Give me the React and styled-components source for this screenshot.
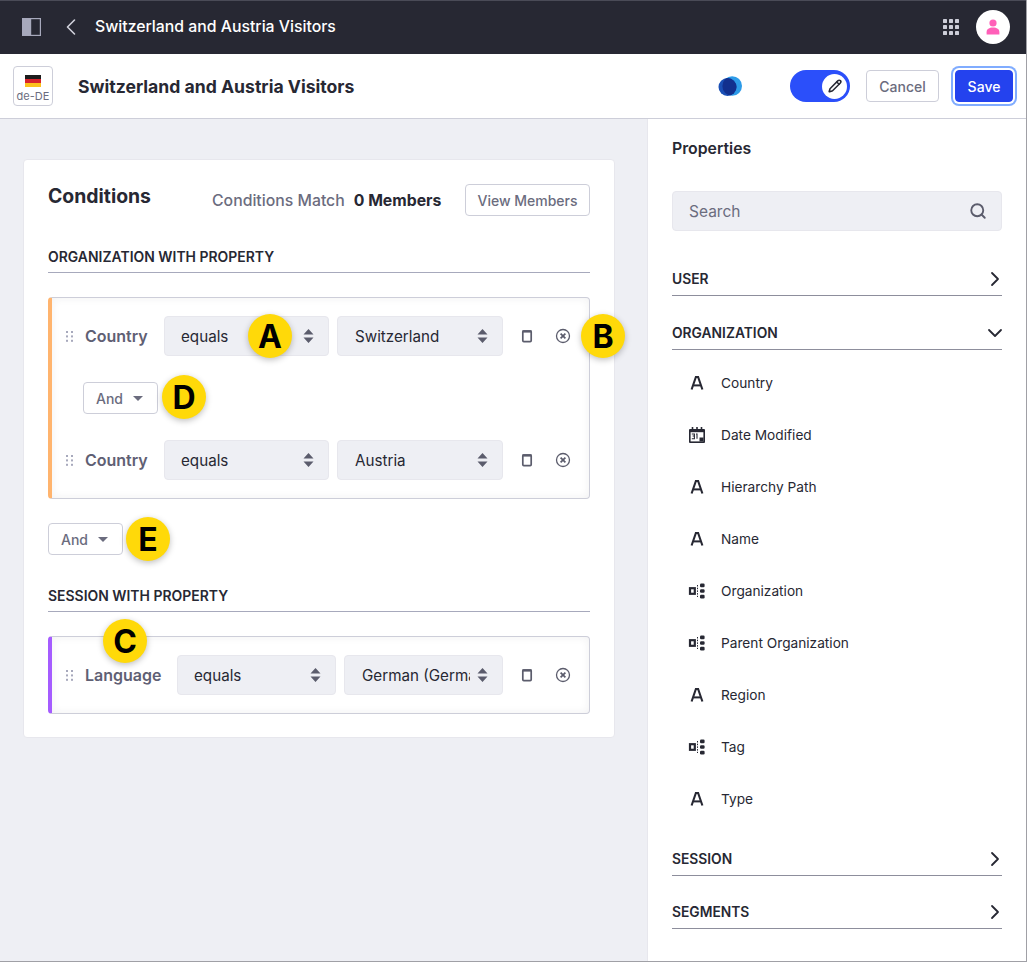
import styled, { createGlobalStyle } from "styled-components";
import { LuChevronLeft, LuChevronRight, LuChevronDown, LuSearch, LuPencil } from "react-icons/lu";

const GlobalStyle = createGlobalStyle`
  html, body {
    margin: 0;
    padding: 0;
    background: #eeeff4;
    font-family: Inter, "Liberation Sans", sans-serif;
  }
  * {
    box-sizing: border-box;
  }
`;

const Page = styled.div`
  width: 1027px;
  height: 962px;
  display: flex;
  flex-direction: column;
  overflow: hidden;
  border-right: 1px solid #a0a0a6;
  border-bottom: 1px solid #a0a0a6;
`;

const TopBar = styled.header`
  height: 54px;
  flex: none;
  background: #272833;
  border-top: 1px solid #4a4b57;
  display: flex;
  align-items: center;
  padding: 0 16px 2px 22px;
  color: #fff;
`;

const PanelIcon = styled.svg`
  width: 19px;
  height: 18px;
`;

const BackIcon = styled(LuChevronLeft)`
  width: 28px;
  height: 28px;
  color: #cfd0da;
  margin: 0 10px 0 16px;
  stroke-width: 1.4;
`;

const TopTitle = styled.span`
  font-size: 15.8px;
  font-weight: 500;
  flex: 1;
`;

const AppsIcon = styled.svg`
  width: 16px;
  height: 16px;
  margin-right: 17px;
`;

const Avatar = styled.div`
  width: 34px;
  height: 34px;
  border-radius: 50%;
  background: #fff;
  display: flex;
  align-items: center;
  justify-content: center;
`;

const SubBar = styled.div`
  height: 65px;
  flex: none;
  background: #fff;
  border-bottom: 1px solid #cdced9;
  display: flex;
  align-items: center;
  padding: 0 13px;
`;

const LocaleBox = styled.div`
  width: 40px;
  height: 40px;
  border: 1px solid #cdced9;
  border-radius: 4px;
  display: flex;
  flex-direction: column;
  align-items: center;
  padding-top: 8px;
  font-size: 11px;
  color: #6b6c7e;
  margin-right: 25px;
  line-height: 14px;
`;

const Flag = styled.div`
  width: 16px;
  height: 12px;
  margin-bottom: 2px;
  background: linear-gradient(#1c1c1c 0 33%, #d8232a 33% 66%, #fcc21b 66% 100%);
`;

const SubTitle = styled.h1`
  margin: 0;
  flex: 1;
  font-size: 17.6px;
  font-weight: 700;
  color: #272833;
`;

const LogoIcon = styled.svg`
  width: 24px;
  height: 20px;
  margin-right: 48px;
`;

const Toggle = styled.div`
  width: 60px;
  height: 32px;
  border-radius: 16px;
  background: #2b4ffa;
  display: flex;
  align-items: center;
  justify-content: flex-end;
  padding-right: 3px;
  margin-right: 16px;
`;

const ToggleKnob = styled.div`
  width: 25px;
  height: 25px;
  border-radius: 50%;
  background: #fff;
  display: flex;
  align-items: center;
  justify-content: center;
  color: #272833;

  svg {
    stroke-width: 2.6;
  }
`;

const Button = styled.button`
  height: 32px;
  width: ${(p) => p.$width || 73}px;
  padding: 0;
  justify-content: center;
  background: #fff;
  border: 1px solid #cdced9;
  border-radius: 4px;
  color: #6b6c7e;
  font-family: inherit;
  font-size: 14px;
  font-weight: 500;
  display: flex;
  align-items: center;
`;

const SaveButton = styled(Button)`
  margin-left: 16px;
  background: #2442ee;
  border-color: #2442ee;
  color: #fff;
  box-shadow: 0 0 0 2px #fff, 0 0 0 4px #80acff;
`;

const Body = styled.div`
  flex: 1;
  display: flex;
  min-height: 0;
`;

const Main = styled.main`
  width: 647px;
  flex: none;
  padding: 40px 32px 0 23px;
`;

const Card = styled.section`
  height: 579px;
  background: #fff;
  border: 1px solid #e7e7ed;
  border-radius: 4px;
  padding: 24px 24px 0;
`;

const CardHead = styled.div`
  display: flex;
  align-items: flex-start;
  height: 32px;
`;

const CardTitle = styled.h2`
  margin: 0;
  width: 164px;
  font-size: 19.4px;
  line-height: 24px;
  font-weight: 700;
  color: #272833;
`;

const MatchText = styled.div`
  flex: 1;
  font-size: 15.8px;
  line-height: 34px;
  font-weight: 500;
  color: #6b6c7e;

  strong {
    margin-left: 9px;
    font-weight: 700;
    color: #272833;
  }
`;

const SectionTitle = styled.div`
  margin-top: 32px;
  height: 25px;
  border-bottom: 1px solid #a7a9bc;
  font-size: 13.95px;
  line-height: 18px;
  font-weight: 600;
  color: #272833;
`;

const Group = styled.div`
  margin-top: 24px;
  padding: 18px 0 18px;
  border: 1px solid #cdced9;
  border-left: 4px solid ${(p) => p.$accent};
  border-radius: 4px;
  box-shadow: inset 0 0 8px rgba(39, 40, 51, 0.07);
  display: flex;
  flex-direction: column;
`;

const Row = styled.div`
  display: flex;
  align-items: center;
  height: 40px;
  padding-left: 14px;
`;

const Grip = styled.svg`
  width: 7px;
  height: 11px;
  margin-right: 12px;
  flex: none;
`;

const FieldLabel = styled.span`
  width: ${(p) => p.$width}px;
  flex: none;
  font-size: 16px;
  font-weight: 600;
  color: #5f6074;
`;

const Select = styled.div`
  width: ${(p) => p.$width}px;
  height: 40px;
  flex: none;
  margin-right: 8px;
  padding: 0 14px 0 ${(p) => p.$inset}px;
  background: #eeeff4;
  border: 1px solid #e7e7ed;
  border-radius: 4px;
  display: flex;
  align-items: center;
  justify-content: space-between;
  font-size: 15.2px;
  color: #272833;

  span {
    overflow: hidden;
    white-space: nowrap;
    flex: 1;
    min-width: 0;
  }
`;

const Sort = styled.svg`
  width: 11px;
  height: 14px;
  flex: none;
  margin-left: 7px;
`;

const ActionIcon = styled.svg`
  width: 16px;
  height: 16px;
  flex: none;
  margin-left: ${(p) => p.$left}px;
`;

const AndButton = styled(Button)`
  width: 75px;
  padding: 0 12px;
  justify-content: space-between;
  margin: ${(p) => p.$margin};

  &::after {
    content: "";
    border-left: 5px solid transparent;
    border-right: 5px solid transparent;
    border-top: 5px solid #6b6c7e;
    margin-right: 2px;
  }
`;

const Badge = styled.div`
  position: absolute;
  left: ${(p) => p.$x}px;
  top: ${(p) => p.$y}px;
  width: 44px;
  height: 44px;
  border-radius: 50%;
  background: #ffd909;
  box-shadow: 0 2px 6px rgba(0, 0, 0, 0.25);
  color: #000;
  font-size: 32px;
  font-weight: 700;
  display: flex;
  align-items: center;
  justify-content: center;
  z-index: 2;
`;

const Side = styled.aside`
  flex: 1;
  background: #fff;
  border-left: 1px solid #e7e7ed;
  padding: 20px 24px 0 24px;
`;

const SideTitle = styled.h3`
  margin: 0;
  font-size: 15.8px;
  line-height: 19px;
  font-weight: 600;
  color: #272833;
`;

const SearchBox = styled.div`
  margin-top: 33px;
  height: 40px;
  background: #eeeff4;
  border: 1px solid #e7e7ed;
  border-radius: 4px;
  display: flex;
  align-items: center;
  justify-content: space-between;
  padding: 0 14px 0 16px;
  font-size: 15.5px;
  color: #6b6c7e;

  svg {
    stroke-width: 2.5;
  }
`;

const SectionHead = styled.div`
  margin-top: ${(p) => p.$top}px;
  height: 34px;
  border-bottom: 1px solid #8d8e9c;
  display: flex;
  align-items: center;
  justify-content: space-between;
  font-size: 13.8px;
  font-weight: 600;
  color: #272833;

  svg {
    width: 24px;
    height: 24px;
    margin-right: -5px;
    stroke-width: 1.8;
  }
`;

const PropertyList = styled.ul`
  list-style: none;
  margin: 7px 0 0;
  padding: 0;
`;

const PropertyItem = styled.li`
  height: 52px;
  display: flex;
  align-items: center;
  padding-left: 16px;
  font-size: 13.7px;
  color: #272833;
`;

const PropertyIcon = styled.div`
  width: 33px;
  flex: none;
  display: flex;
`;

const TextGlyph = () => (
  <svg width="18" height="18" viewBox="0 0 18 18">
    <path d="M3.6 15.5 7.9 3h2.2l4.3 12.5" fill="none" stroke="#272833" strokeWidth="2.1" />
    <path d="M5.4 11.4h7.2" stroke="#272833" strokeWidth="2" />
  </svg>
);

const DateGlyph = () => (
  <svg width="18" height="18" viewBox="0 0 18 18">
    <path d="M2 3h14a1 1 0 0 1 1 1v12a1 1 0 0 1-1 1H2a1 1 0 0 1-1-1V4a1 1 0 0 1 1-1z" fill="#272833" />
    <path d="M4.5 1v3M9 1v3M13.5 1v3" stroke="#272833" strokeWidth="1.6" />
    <rect x="2.6" y="6.2" width="12.8" height="9.2" fill="#fff" />
    <path d="M3.8 8h2.6v2H4.6h1.8v2.8H3.8M8 8h1v4.8" fill="none" stroke="#272833" strokeWidth="1.1" />
    <path d="M11.5 11.5h4v4h-4z" fill="#272833" />
  </svg>
);

const OrgGlyph = () => (
  <svg width="18" height="18" viewBox="0 0 18 18">
    <rect x="2" y="6.2" width="4.8" height="5.6" fill="none" stroke="#272833" strokeWidth="2.2" />
    <path d="M9.5 3v12" stroke="#272833" strokeWidth="1" strokeDasharray="1.5 1.2" />
    <rect x="12" y="1.6" width="4.6" height="3.6" rx="1.2" fill="#272833" />
    <rect x="12" y="7.2" width="4.6" height="3.6" rx="1.2" fill="#272833" />
    <rect x="12" y="12.8" width="4.6" height="3.6" rx="1.2" fill="#272833" />
  </svg>
);

const SortIcon = () => (
  <Sort viewBox="0 0 11 14">
    <path d="M5.5 0 10.5 5.5H.5zM5.5 14 .5 8.5h10z" fill="#5b5c6c" />
  </Sort>
);

const GripIcon = () => (
  <Grip viewBox="0 0 7 11">
    {[0, 4.4, 8.8].map((y) => (
      <g key={y} fill="#a7a9bc">
        <rect x="0" y={y} width="2" height="2" />
        <rect x="5" y={y} width="2" height="2" />
      </g>
    ))}
  </Grip>
);

const Actions = () => (
  <>
    <ActionIcon $left={8} viewBox="0 0 16 16">
      <rect x="3.8" y="3" width="8.4" height="10.6" rx="1" fill="none" stroke="#5b5c6c" strokeWidth="1.7" />
      <path d="M3.4 3.4h9.2" stroke="#5b5c6c" strokeWidth="2.4" />
    </ActionIcon>
    <ActionIcon $left={20} viewBox="0 0 16 16">
      <circle cx="8" cy="8" r="6.5" fill="none" stroke="#5b5c6c" strokeWidth="1.3" />
      <path d="M5.6 5.6l4.8 4.8M10.4 5.6l-4.8 4.8" stroke="#5b5c6c" strokeWidth="1.7" />
    </ActionIcon>
  </>
);

function CriteriaRow({ label, labelWidth, first, second, firstWidth, secondWidth }) {
  return (
    <Row>
      <GripIcon />
      <FieldLabel $width={labelWidth}>{label}</FieldLabel>
      <Select $width={firstWidth} $inset={16}>
        <span>{first}</span>
        <SortIcon />
      </Select>
      <Select $width={secondWidth} $inset={17}>
        <span>{second}</span>
        <SortIcon />
      </Select>
      <Actions />
    </Row>
  );
}

const properties = [
  ["Country", TextGlyph],
  ["Date Modified", DateGlyph],
  ["Hierarchy Path", TextGlyph],
  ["Name", TextGlyph],
  ["Organization", OrgGlyph],
  ["Parent Organization", OrgGlyph],
  ["Region", TextGlyph],
  ["Tag", OrgGlyph],
  ["Type", TextGlyph],
];

const badges = [
  ["A", 248, 314],
  ["B", 581, 314],
  ["C", 103, 619],
  ["D", 162, 375],
  ["E", 126, 517],
];

export default function App() {
  return (
    <Page>
      <GlobalStyle />
      <TopBar>
        <PanelIcon viewBox="0 0 19 18">
          <rect x="0.6" y="0.6" width="17.8" height="16.8" fill="none" stroke="#a7a9bc" strokeWidth="1.2" />
          <rect x="0.6" y="0.6" width="8.6" height="16.8" fill="#a7a9bc" />
        </PanelIcon>
        <BackIcon />
        <TopTitle>Switzerland and Austria Visitors</TopTitle>
        <AppsIcon viewBox="0 0 16 16">
          {[0, 6, 12].map((y) =>
            [0, 6, 12].map((x) => (
              <rect key={`${x}-${y}`} x={x} y={y} width="4" height="4" rx="0.4" fill="#cdced9" />
            ))
          )}
        </AppsIcon>
        <Avatar>
          <svg width="14" height="16" viewBox="0 0 14 16">
            <circle cx="7" cy="4" r="3.6" fill="#ff5fb8" />
            <path d="M0.6 15.4v-2.2c0-3 2.6-4.6 6.4-4.6s6.4 1.6 6.4 4.6v2.2z" fill="#ff5fb8" />
          </svg>
        </Avatar>
      </TopBar>
      <SubBar>
        <LocaleBox>
          <Flag />
          de-DE
        </LocaleBox>
        <SubTitle>Switzerland and Austria Visitors</SubTitle>
        <LogoIcon viewBox="0 0 24 20">
          <defs>
            <clipPath id="logo-overlap">
              <circle cx="9.5" cy="11" r="9" />
            </clipPath>
          </defs>
          <circle cx="14.2" cy="10" r="9.8" fill="#2d9be8" />
          <circle cx="9.5" cy="11" r="9" fill="#1a4fb5" />
          <circle cx="14.2" cy="10" r="9.8" fill="#12308e" clipPath="url(#logo-overlap)" />
        </LogoIcon>
        <Toggle>
          <ToggleKnob>
            <LuPencil size={14} />
          </ToggleKnob>
        </Toggle>
        <Button>Cancel</Button>
        <SaveButton $width={58}>Save</SaveButton>
      </SubBar>
      <Body>
        <Main>
          <Card>
            <CardHead>
              <CardTitle>Conditions</CardTitle>
              <MatchText>
                Conditions Match<strong>0 Members</strong>
              </MatchText>
              <Button $width={125}>View Members</Button>
            </CardHead>
            <SectionTitle>ORGANIZATION WITH PROPERTY</SectionTitle>
            <Group $accent="#ffb46e">
              <CriteriaRow label="Country" labelWidth={79} first="equals" second="Switzerland" firstWidth={165} secondWidth={166} />
              <AndButton $margin="26px 0 26px 31px">And</AndButton>
              <CriteriaRow label="Country" labelWidth={79} first="equals" second="Austria" firstWidth={165} secondWidth={166} />
            </Group>
            <AndButton $margin="24px 0 0">And</AndButton>
            <SectionTitle>SESSION WITH PROPERTY</SectionTitle>
            <Group $accent="#a55cff">
              <CriteriaRow label="Language" labelWidth={92} first="equals" second="German (Germany)" firstWidth={159} secondWidth={159} />
            </Group>
          </Card>
        </Main>
        <Side>
          <SideTitle>Properties</SideTitle>
          <SearchBox>
            Search
            <LuSearch size={18} color="#5b5c6c" />
          </SearchBox>
          <SectionHead $top={31}>
            USER
            <LuChevronRight />
          </SectionHead>
          <SectionHead $top={20}>
            ORGANIZATION
            <LuChevronDown />
          </SectionHead>
          <PropertyList>
            {properties.map(([name, Glyph]) => (
              <PropertyItem key={name}>
                <PropertyIcon>
                  <Glyph />
                </PropertyIcon>
                {name}
              </PropertyItem>
            ))}
          </PropertyList>
          <SectionHead $top={17}>
            SESSION
            <LuChevronRight />
          </SectionHead>
          <SectionHead $top={19}>
            SEGMENTS
            <LuChevronRight />
          </SectionHead>
        </Side>
      </Body>
      {badges.map(([letter, x, y]) => (
        <Badge key={letter} $x={x} $y={y}>
          {letter}
        </Badge>
      ))}
    </Page>
  );
}
